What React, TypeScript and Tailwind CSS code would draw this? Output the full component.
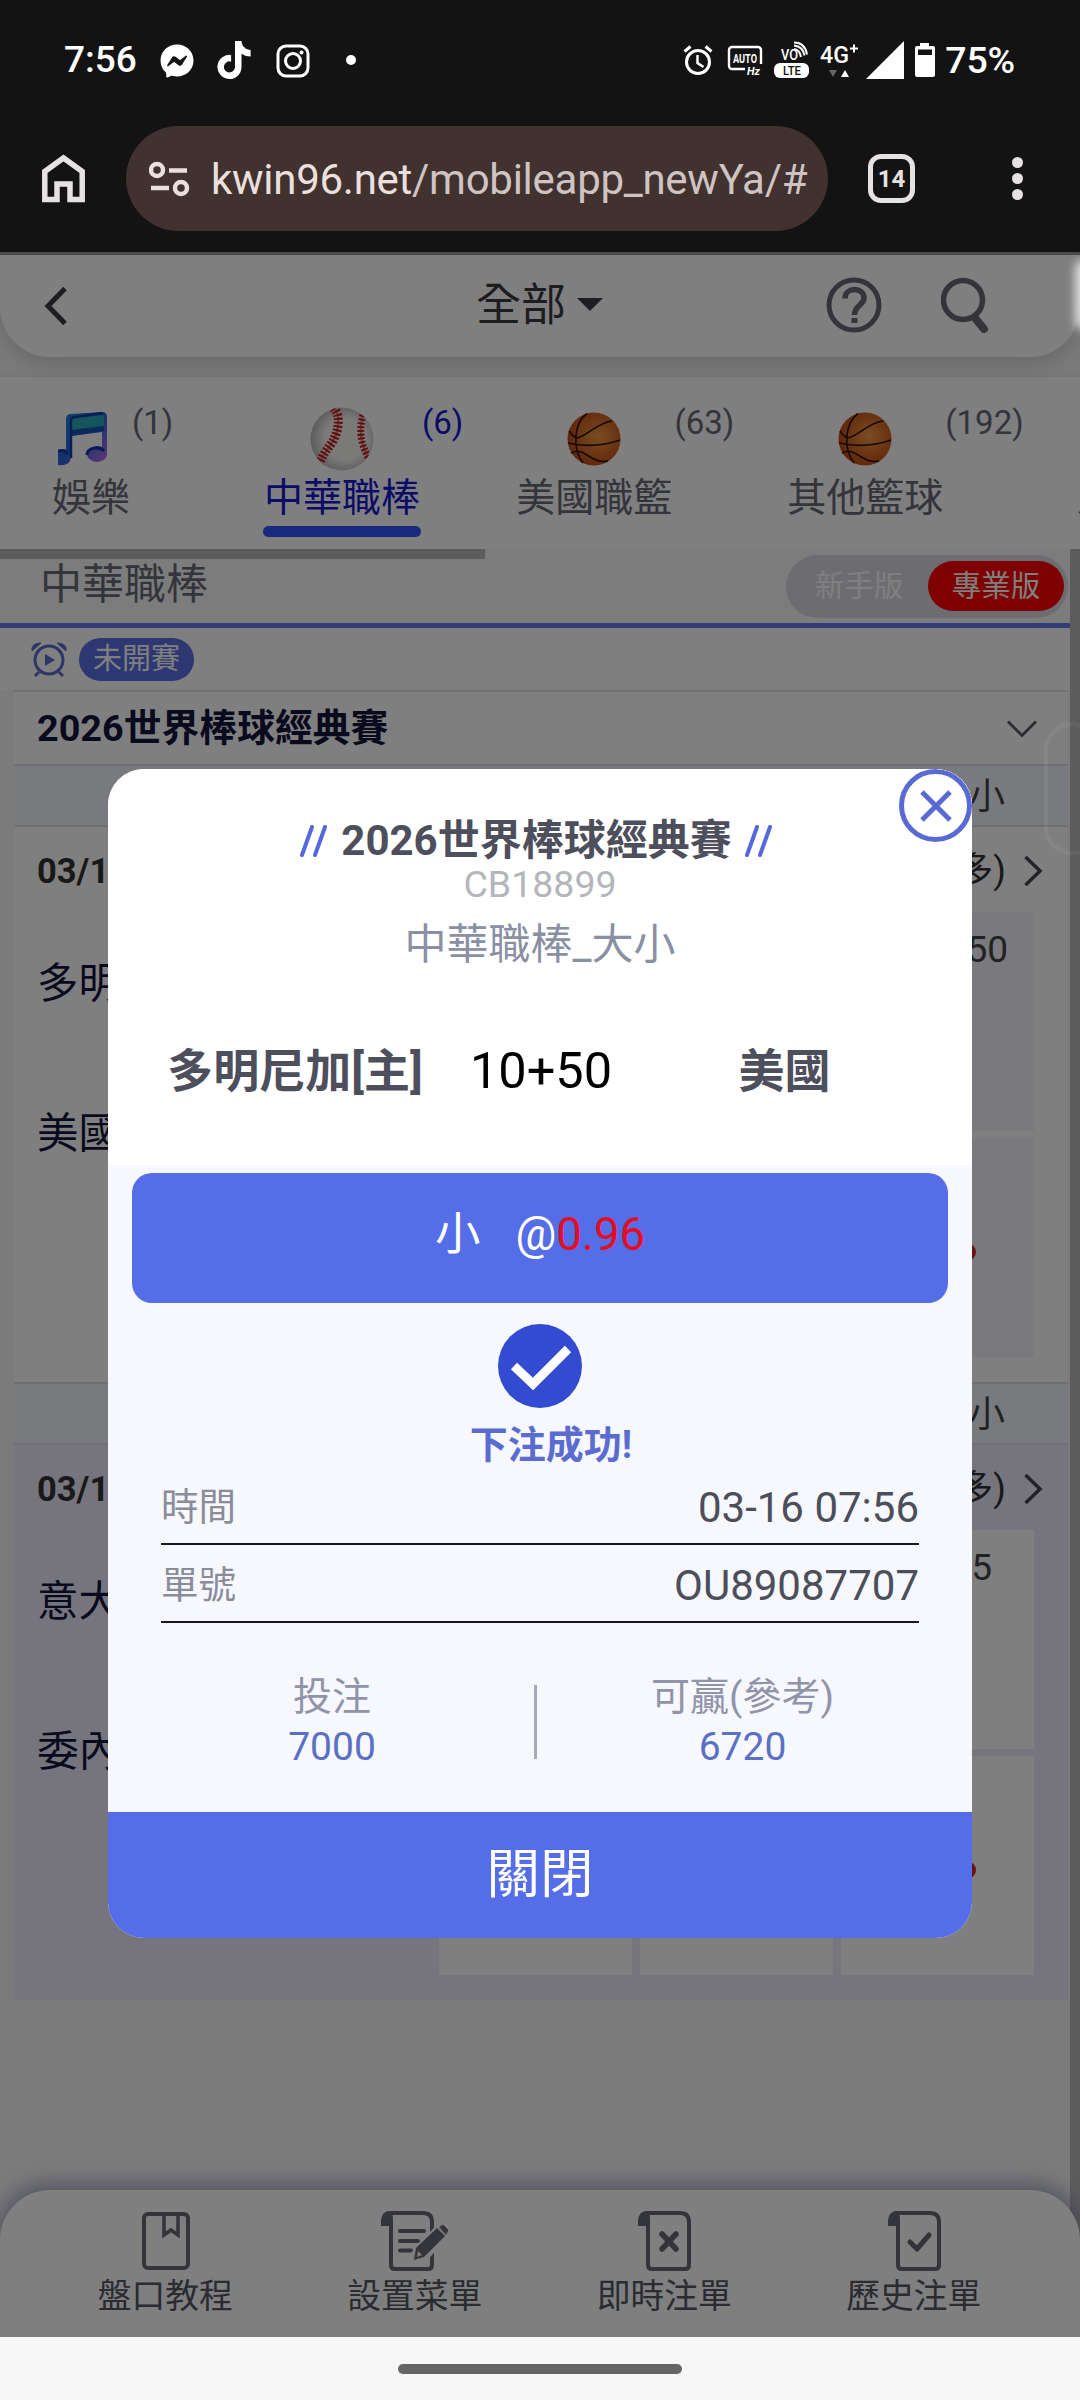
import { FaFacebookMessenger, FaTiktok } from "react-icons/fa6";

const tabs = [
  { name: "娛樂", count: 1, icon: "music" },
  { name: "中華職棒", count: 6, icon: "baseball", active: true },
  { name: "美國職籃", count: 63, icon: "basketball" },
  { name: "其他籃球", count: 192, icon: "basketball" },
  { name: "足球" },
];

const navItems = [
  { name: "盤口教程", icon: "book" },
  { name: "設置菜單", icon: "edit" },
  { name: "即時注單", icon: "cross" },
  { name: "歷史注單", icon: "check" },
];

function StatusBar() {
  return (
    <div className="flex h-[119px] items-center pl-[64px] pr-[65px] text-white">
      <span className="w-[96px] text-[37px] font-medium leading-none">7:56</span>
      <FaFacebookMessenger className="mt-[3px] h-[34px] w-[34px]" />
      <FaTiktok className="ml-[22px] h-[38px] w-[36px]" />
      <svg className="ml-[24px] mt-[2px] h-[34px] w-[34px]" viewBox="0 0 34 34" fill="none" stroke="currentColor" strokeWidth="3">
        <rect x="2" y="2" width="30" height="30" rx="8" />
        <circle cx="17" cy="17" r="7.5" />
        <circle cx="25.5" cy="8.5" r="2" fill="currentColor" stroke="none" />
      </svg>
      <span className="ml-[36px] mt-[1px] h-[10px] w-[10px] rounded-full bg-white" />
      <div className="ml-auto flex items-center">
        <svg className="h-[32px] w-[30px]" viewBox="0 0 30 32" fill="none" stroke="currentColor" strokeWidth="3">
          <circle cx="15" cy="18" r="11.5" />
          <path d="M14.500 11v8l6 4" strokeWidth="2.500" />
          <path d="M1.500 7.500l6-5M28.500 7.500l-6-5" />
        </svg>
        <svg className="ml-[14px] mt-[3px] h-[34px] w-[36px]" viewBox="0 0 36 34" fill="none">
          <path d="M18 25H5a3 3 0 0 1-3-3V6a3 3 0 0 1 3-3h26a3 3 0 0 1 3 3v14" stroke="white" strokeWidth="2.400" />
          <text x="6" y="18.500" fontSize="12" fontWeight="700" fill="white" textLength="24" lengthAdjust="spacingAndGlyphs" fontFamily="Roboto">AUTO</text>
          <text x="20" y="31" fontSize="11" fontWeight="700" fontStyle="italic" fill="white" fontFamily="Roboto">Hz</text>
        </svg>
        <svg className="ml-[11px] h-[38px] w-[36px]" viewBox="0 0 36 38" fill="none">
          <text x="7" y="19" fontSize="15" fontWeight="500" fill="white" textLength="17" lengthAdjust="spacingAndGlyphs" fontFamily="Roboto">VO</text>
          <path d="M20 8q6 1 7 8M20 4.500q9 1 10.500 10M20 1.500q11 0 13 12" stroke="white" strokeWidth="2" />
          <rect x="0" y="22" width="35" height="15" rx="6" fill="white" />
          <text x="9" y="34" fontSize="12.500" fontWeight="500" fill="#131313" textLength="18" lengthAdjust="spacingAndGlyphs" fontFamily="Roboto">LTE</text>
        </svg>
        <svg className="ml-[10px] h-[36px] w-[38px]" viewBox="0 0 38 36">
          <text x="0" y="21" fontSize="24" fontWeight="500" fill="white" textLength="29" lengthAdjust="spacingAndGlyphs" fontFamily="Roboto">4G</text>
          <path d="M30 6.500h8M34 2.500v8" stroke="white" strokeWidth="2" />
          <path d="M9 28h8l-4 7z" fill="#666" />
          <path d="M21 35h8l-4-7z" fill="white" />
        </svg>
        <svg className="ml-[8px] h-[38px] w-[38px]" viewBox="0 0 38 38">
          <path d="M0 38L38 0v38z" fill="white" />
        </svg>
        <svg className="ml-[11px] h-[34px] w-[20px]" viewBox="0 0 20 34">
          <path d="M5 3V0h9v3h4a2 2 0 0 1 2 2v27a2 2 0 0 1-2 2H2a2 2 0 0 1-2-2V5a2 2 0 0 1 2-2z" fill="white" />
          <path d="M3 6.500h14v5.500H3z" fill="#131313" />
        </svg>
        <span className="ml-[10px] mt-[3px] text-[37.500px] font-medium leading-none tracking-[-0.2px]">75%</span>
      </div>
    </div>
  );
}

function BrowserBar() {
  return (
    <div className="flex h-[133px] items-start pl-[42px] pt-[7px]">
      <svg className="mt-[28px] h-[49px] w-[43px]" viewBox="0 0 43 49" fill="none" stroke="#e6e2e1" strokeWidth="5.500">
        <path d="M2.800 45.500V17.500L21.500 4l18.700 13.500v28H28V30H15v15.500z" />
      </svg>
      <div className="ml-[41px] flex h-[105px] w-[702px] items-center rounded-full bg-[#413230] pl-[23px]">
        <svg className="h-[36px] w-[41px] shrink-0" viewBox="0 0 41 36" fill="none" stroke="#ebe0de" strokeWidth="4.500">
          <circle cx="8" cy="9" r="6" />
          <path d="M20 9.500h18M2 27h18" />
          <circle cx="32" cy="27" r="6" />
        </svg>
        <div className="ml-[21px] mt-[2px] whitespace-nowrap text-[42px] leading-[60px] tracking-[-0.270px] text-[#cfc4c2]">
          <span className="text-[#ebe0de]">kwin96.net</span>/mobileapp_newYa/#
        </div>
      </div>
      <div className="ml-[40px] mt-[28px] flex h-[49px] w-[47px] items-center justify-center rounded-[13px] border-[5px] border-[#e6e2e1] text-[24px] font-bold leading-none text-[#e6e2e1]">
        14
      </div>
      <div className="ml-[97px] mt-[31px] flex flex-col gap-[5px]">
        <span className="h-[11px] w-[11px] rounded-full bg-[#e6e2e1]" />
        <span className="h-[11px] w-[11px] rounded-full bg-[#e6e2e1]" />
        <span className="h-[11px] w-[11px] rounded-full bg-[#e6e2e1]" />
      </div>
    </div>
  );
}

function Header() {
  return (
    <div className="relative z-10 flex h-[102px] items-center rounded-b-[50px] bg-white shadow-[0_6px_24px_rgba(0,0,0,0.16)]">
      <svg className="-mt-px ml-[44px] h-[40px] w-[24px]" viewBox="0 0 24 40" fill="none" stroke="#3a3a46" strokeWidth="5">
        <path d="M21 2.500L4 20l17 17.500" />
      </svg>
      <div className="-mt-[2px] ml-[408px] flex items-center text-[45px] leading-none text-[#3a3a42]">
        全部
        <svg className="ml-[11px] mt-[-2px] h-[13px] w-[26px]" viewBox="0 0 26 13">
          <path d="M0 0h26L13 13z" fill="#3a3a46" />
        </svg>
      </div>
      <svg className="-mt-[3px] ml-[223px] h-[56px] w-[56px]" viewBox="0 0 56 56" fill="none" stroke="#686876">
        <circle cx="28" cy="28" r="25" strokeWidth="5" />
        <path d="M19 21.500c0-12 19-12 19-.5 0 7.500-9.500 7-9.500 17" strokeWidth="5.500" />
        <path d="M28.500 41v5" strokeWidth="6" />
      </svg>
      <svg className="-mt-[3px] ml-[59px] h-[56px] w-[50px]" viewBox="0 0 50 56" fill="none" stroke="#686876" strokeLinecap="round">
        <circle cx="22" cy="23" r="19.500" strokeWidth="5.500" />
        <path d="M34 41l9 11" strokeWidth="8" />
      </svg>
    </div>
  );
}

function TabIcon({ type }: { type: string }) {
  if (type === "music") {
    return (
      <svg className="h-[54px] w-[50px]" viewBox="0 0 50 54" fill="none">
        <defs>
          <linearGradient id="note" x1="0" y1="0" x2="1" y2="1">
            <stop offset="0" stopColor="#1a8fd0" />
            <stop offset="0.5" stopColor="#2a62d8" />
            <stop offset="1" stopColor="#c870f0" />
          </linearGradient>
        </defs>
        <path d="M8 7q0-5 5-5L44 0q5 0 5 5v38a10 8 0 1 1-5-8V20L13 24v20c0 8-6 10-13 9V38h8z" fill="url(#note)" />
        <path d="M13 7l33-4v11l-33 4z" fill="#2aaab8" />
        <path d="M13 18l33-4v5l-33 5z" fill="#1a52b8" />
        <path d="M13 46V9q0-4 4-4l28-4" stroke="#1040b0" strokeWidth="2.500" />
        <path d="M0 39q8-2 9 3M29 43c0-8 13-9 17-4" stroke="#1038b0" strokeWidth="3" />
      </svg>
    );
  }
  if (type === "baseball") {
    return (
      <svg className="h-[64px] w-[64px]" viewBox="0 0 64 64" fill="none">
        <defs>
          <radialGradient id="ball" cx="0.550" cy="0.500" r="0.550">
            <stop offset="0.600" stopColor="#f4f4f2" />
            <stop offset="1" stopColor="#b8b8b8" />
          </radialGradient>
          <clipPath id="ballClip">
            <circle cx="32" cy="32" r="31.500" />
          </clipPath>
        </defs>
        <circle cx="32" cy="32" r="31.500" fill="url(#ball)" />
        <g clipPath="url(#ballClip)">
          <path d="M23 1c10 8 4 28-2 36S13 48 9 57M53 8c-4 14-3 28 6 44" stroke="#d98880" strokeWidth="2.500" />
          <path d="M23 1c10 8 4 28-2 36S13 48 9 57" stroke="#c4191d" strokeWidth="9" strokeDasharray="2 1.800" />
          <path d="M53 8c-4 14-3 28 6 44" stroke="#c4191d" strokeWidth="7" strokeDasharray="2 1.800" />
        </g>
      </svg>
    );
  }
  return (
    <svg className="h-[54px] w-[54px]" viewBox="0 0 54 54" fill="none">
      <defs>
        <radialGradient id="basket" cx="0.580" cy="0.450" r="0.600">
          <stop offset="0" stopColor="#f59a45" />
          <stop offset="1" stopColor="#c04a12" />
        </radialGradient>
      </defs>
      <circle cx="27" cy="27" r="26.500" fill="url(#basket)" />
      <path d="M20 1.500C8 10 4 35 16 51M1 31q27 6 52-3M2 19c4 6 7 8 11 6C23 21 31 11 45 9M4 41c10-5 14 2 23 6 5 3 9 3 14 2" stroke="#2a1208" strokeWidth="1.600" />
    </svg>
  );
}

function TabBar() {
  return (
    <div className="flex h-[172px] gap-[53px] overflow-hidden bg-white pl-[52px] pt-[28px] shadow-[0_4px_12px_rgba(0,0,0,0.15)]">
      {tabs.map((tab) => (
        <div
          key={tab.name}
          className={`flex shrink-0 first:w-[159px] ${tab.active ? "text-[#1616d0]" : "text-[#686876]"}`}
        >
          <div className="flex flex-col items-center">
            <div className={`flex h-[68px] items-center ${tab.icon === "music" ? "mr-[17px]" : ""}`}>
              {tab.icon && <TabIcon type={tab.icon} />}
            </div>
            <span className="mt-[5px] text-[39px] leading-[40px]">{tab.name}</span>
            {tab.active && <span className="-mx-[1px] mt-[8px] h-[11px] w-[158px] rounded-full bg-[#3353fd]" />}
          </div>
          {tab.count && <span className="-mt-[3px] ml-[2px] text-[33px] leading-[42px]">({tab.count})</span>}
        </div>
      ))}
    </div>
  );
}

function LeagueBar() {
  return (
    <div className="flex h-[79px] items-center border-b-[5px] border-[#6878ee] bg-[#f9f9f9] pl-[40px] pr-[2px]">
      <span className="-mt-[3px] text-[42px] leading-none text-[#686876]">中華職棒</span>
      <div className="ml-auto flex h-[63px] w-[282px] items-center rounded-full bg-[#dad9e0] pr-[4px] text-[29.500px] leading-none">
        <span className="flex-1 pl-[4px] pt-[2px] text-center text-[#fff]">新手版</span>
        <span className="flex h-[50px] w-[136px] items-center justify-center rounded-full bg-[#ff0000] pt-[2px] text-white">專業版</span>
      </div>
    </div>
  );
}

function ColumnHead() {
  return (
    <div className="flex h-[63px] items-center justify-end border-y-[2px] border-[#dedfe6] bg-[#f2f4fb] pr-[63px] pt-[3px] text-[36px] leading-none text-[#444]">
      大小
    </div>
  );
}

function Match({ home, away, line, tinted }: { home: string; away: string; line: string; tinted?: boolean }) {
  const cell = tinted ? "bg-white" : "bg-[#f2f3fc]";
  return (
    <div className={tinted ? "h-[555px] bg-[#ecebfb]" : "h-[555px] bg-white"}>
      <div className="flex h-[84px] items-center pl-[23px] pr-[25px] pt-[4px] text-[#333]">
        <span className="text-[34.500px] font-bold leading-none">03/16</span>
        <span className="ml-auto text-[36.500px] leading-none">(更多)</span>
        <svg className="ml-[17px] h-[32px] w-[20px]" viewBox="0 0 20 32" fill="none" stroke="#44444e" strokeWidth="3.500">
          <path d="M2.500 2L17 16 2.500 30" />
        </svg>
      </div>
      <div className="flex pl-[23px] pt-px">
        <div className="w-[402px] text-[41.500px] leading-[150px] text-[#15153f]">
          <div className="-mt-[3px]">{home}</div>
          <div>{away}</div>
        </div>
        <div className="grid grid-cols-[193px_193px_193px] grid-rows-[219px_219px] gap-x-[8px] gap-y-[7px]">
          {[0, 1, 2, 3, 4, 5].map((n) => (
            <div key={n} className={`${cell} text-[37px] text-[#444]`}>
              {n === 2 && (
                <div className={`mt-[17px] text-right leading-[42px] ${tinted ? "pr-[42px]" : "pr-[26px]"}`}>{line}</div>
              )}
              {n === 5 && <div className="ml-[117px] mt-[105px] h-[18px] w-[18px] rounded-full bg-[#d02a20]" />}
            </div>
          ))}
        </div>
      </div>
    </div>
  );
}

function NavIcon({ type }: { type: string }) {
  if (type === "book") {
    return (
      <svg className="ml-[2px] h-[60px] w-[48px]" viewBox="0 -1 48 60" fill="none" stroke="#686876" strokeWidth="4">
        <rect x="2" y="2" width="44" height="54" rx="4" />
        <path d="M22 3v20l7-5 7 5V3" strokeWidth="3.500" />
      </svg>
    );
  }
  return (
    <svg className={type === "edit" ? "h-[60px] w-[68px]" : "ml-[2px] h-[60px] w-[54px]"} viewBox={type === "edit" ? "0 0 68 60" : "0 0 54 60"} fill="none" stroke="#686876" strokeWidth="4" strokeLinecap="round" strokeLinejoin="round">
      <path d="M8 2h34q9 0 9 9v43q0 4-4 4H14q-4 0-4-4V14" />
      <path d="M0 15V9q1-9 9-9 3 2 3 8v7z" fill="#686876" stroke="none" />
      {type === "cross" && <path d="M24 23l14 15M38 23L24 38" strokeWidth="5.500" />}
      {type === "check" && <path d="M22 31l7 7 12-14" strokeWidth="5" />}
      {type === "edit" && (
        <>
          <path d="M19 20h24M19 30h18M19 39.500h11" />
          <path d="M66 15L34 50" stroke="white" strokeWidth="17" strokeLinecap="butt" />
          <path d="M59 16l3-2 5 5-2 4z" fill="#686876" stroke="#686876" strokeWidth="1" />
          <path d="M33 49l2-12 21-20 8 8-21 21z" fill="#686876" stroke="none" />
          <path d="M37 40l4 4-5 2z" fill="white" stroke="none" />
        </>
      )}
    </svg>
  );
}

function BottomNav() {
  return (
    <div className="grid h-[147px] w-full grid-cols-4 rounded-t-[50px] bg-white px-[41px] pt-[21px] shadow-[0_-4px_18px_4px_rgba(110,110,170,0.5)]">
      {navItems.map((item) => (
        <div key={item.name} className="flex flex-col items-center pr-px text-[#565664]">
          <NavIcon type={item.icon} />
          <span className="mt-auto pb-[21px] text-[33.800px] leading-[38px]">{item.name}</span>
        </div>
      ))}
    </div>
  );
}

function Slashes() {
  return (
    <svg className="h-[34px] w-[28px]" viewBox="0 0 28 34" stroke="#5468dc" strokeWidth="4" strokeLinecap="round">
      <path d="M2 31L12 3M15 31L25 3" />
    </svg>
  );
}

function BetResultModal() {
  return (
    <div className="absolute left-[108px] top-[514px] z-30 flex h-[1169px] w-[864px] flex-col overflow-hidden rounded-[36px] bg-[#f6f8fe]">
      <div className="flex h-[396px] flex-col items-center bg-white">
        <button className="absolute right-0 top-0 flex h-[73px] w-[73px] items-center justify-center rounded-full border-[5px] border-[#5a6ad4] bg-white">
          <svg className="h-[32px] w-[32px]" viewBox="0 0 32 32" stroke="#5a6ad4" strokeWidth="5">
            <path d="M2 2l28 28M30 2L2 30" />
          </svg>
        </button>
        <div className="mt-[47px] flex h-[50px] items-center gap-[13px] pr-[7px]">
          <Slashes />
          <h2 className="text-[42px] font-bold leading-none text-[#4e4f5c]">2026世界棒球經典賽</h2>
          <Slashes />
        </div>
        <span className="-mt-px text-[37.500px] leading-[38px] text-[#b5b6bc]">CB18899</span>
        <span className="mt-[17px] text-[42px] leading-[50px] text-[#8a90a3]">中華職棒_大小</span>
        <div className="mt-[74px] flex h-[54px] w-full items-center text-[46px] leading-none text-[#4e4f5c]">
          <span className="w-[374px] text-center font-bold">多明尼加[主]</span>
          <span className="w-[118px] whitespace-nowrap text-center text-[50.500px] text-black">
            <span className="-mx-[20px]">10+50</span>
          </span>
          <span className="flex-1 pr-[3px] text-center font-bold">美國</span>
        </div>
      </div>
      <div className="mx-[24px] mt-[8px] flex h-[130px] items-center justify-center rounded-[20px] bg-[#556de6] pb-[6px] text-[45.500px] leading-none text-white">
        小<span className="ml-[35px]">@</span>
        <span className="text-[#e40d22]">0.96</span>
      </div>
      <svg className="mx-auto mt-[21px] h-[84px] w-[84px] shrink-0" viewBox="0 0 84 84">
        <circle cx="42" cy="42" r="42" fill="#324bd0" />
        <path d="M16 42l19 18 35-35" fill="none" stroke="white" strokeWidth="9" />
      </svg>
      <div className="mt-[16px] pl-[22px] text-center text-[38px] font-bold leading-[42px] text-[#5b6cd0]">下注成功!</div>
      <div className="mx-[53px] mt-[3px]">
        <div className="flex h-[76px] items-center justify-between border-b-[2px] border-[#17171c] pt-[3px]">
          <span className="text-[37.500px] leading-none text-[#8a8c99]">時間</span>
          <span className="text-[42px] leading-none text-[#4c4e59]">03-16 07:56</span>
        </div>
        <div className="flex h-[78px] items-center justify-between border-b-[2px] border-[#17171c] pt-[5px]">
          <span className="text-[37.500px] leading-none text-[#8a8c99]">單號</span>
          <span className="text-[42px] leading-none text-[#4c4e59]">OU89087707</span>
        </div>
      </div>
      <div className="mt-[49px] flex items-center text-[39px] leading-[50px] text-[#5b70c4]">
        <div className="w-[426px] pl-[22px] text-center">
          <div className="text-[#9194a8]">投注</div>
          <div>7000</div>
        </div>
        <div className="h-[74px] w-[3px] bg-[#a6a9b8]" />
        <div className="flex-1 pr-[24px] text-center">
          <div className="text-[#9194a8]">可贏(參考)</div>
          <div>6720</div>
        </div>
      </div>
      <button className="mt-auto flex h-[126px] items-center justify-center bg-[#556de6] pb-px text-[53.500px] leading-none text-white">關閉</button>
    </div>
  );
}

export default function App() {
  return (
    <div className="flex h-[2400px] w-[1080px] flex-col overflow-hidden bg-[#131313] font-['Roboto','Noto_Sans_CJK_TC',sans-serif]">
      <StatusBar />
      <BrowserBar />
      <main className="relative flex h-[2085px] flex-col overflow-hidden border-t-[3px] border-[#4a4a4a] bg-[#f6f6f6]">
        <Header />
        <div className="mt-[20px]">
          <TabBar />
        </div>
        <div className="relative flex flex-1">
          <div className="absolute left-0 top-0 h-[10px] w-[485px] bg-[#b8b8b8]" />
          <div className="w-[1070px]">
            <LeagueBar />
            <div className="flex h-[62px] items-center bg-white pl-[31px]">
              <svg className="h-[36px] w-[36px]" viewBox="0 0 36 36" fill="none" stroke="#5a6cc8" strokeWidth="3">
                <circle cx="18" cy="19" r="14" />
                <path d="M8 31l-4 4M28 31l4 4" />
                <path d="M1 10q-1-8 9-8zM35 10q1-8-9-8z" fill="#5a6cc8" strokeWidth="1" />
                <path d="M14 13l10 6-10 6z" fill="#5a6cc8" stroke="none" />
              </svg>
              <span className="ml-[12px] flex h-[43px] w-[115px] items-center justify-center rounded-full bg-[#5a6ee2] text-[29px] leading-none text-white">未開賽</span>
            </div>
            <div className="ml-[14px] mr-[2px]">
              <div className="flex h-[74px] items-center border-t-[2px] border-[#e4e4e4] bg-white pl-[23px] pr-[31px] pt-px">
                <span className="text-[37.800px] font-bold leading-none text-[#15153f]">2026世界棒球經典賽</span>
                <svg className="ml-auto h-[18px] w-[30px]" viewBox="0 0 30 18" fill="none" stroke="#5a5a68" strokeWidth="3">
                  <path d="M1 1.500l14 14 14-14" />
                </svg>
              </div>
              <ColumnHead />
              <Match home="多明尼加" away="美國" line="10+50" />
              <ColumnHead />
              <Match home="意大利" away="委內瑞拉" line="9-5" tinted />
            </div>
          </div>
          <div className="w-[10px] bg-[#b8b8b8]" />
        </div>
        <div className="absolute inset-x-0 bottom-0">
          <BottomNav />
        </div>
        <div className="absolute inset-0 z-20 bg-black/50" />
        <div className="absolute -right-[8px] top-[10px] z-20 h-[60px] w-[8px] rounded-full bg-white shadow-[0_0_10px_5px_rgba(255,255,255,0.75)]" />
        <div className="absolute -right-[20px] top-[467px] z-20 h-[133px] w-[56px] rounded-[30px] border-[4px] border-white/5" />
        <BetResultModal />
      </main>
      <div className="flex h-[63px] items-center justify-center bg-[#f7f7f7]">
        <div className="h-[10px] w-[284px] rounded-full bg-[#656565]" />
      </div>
    </div>
  );
}
